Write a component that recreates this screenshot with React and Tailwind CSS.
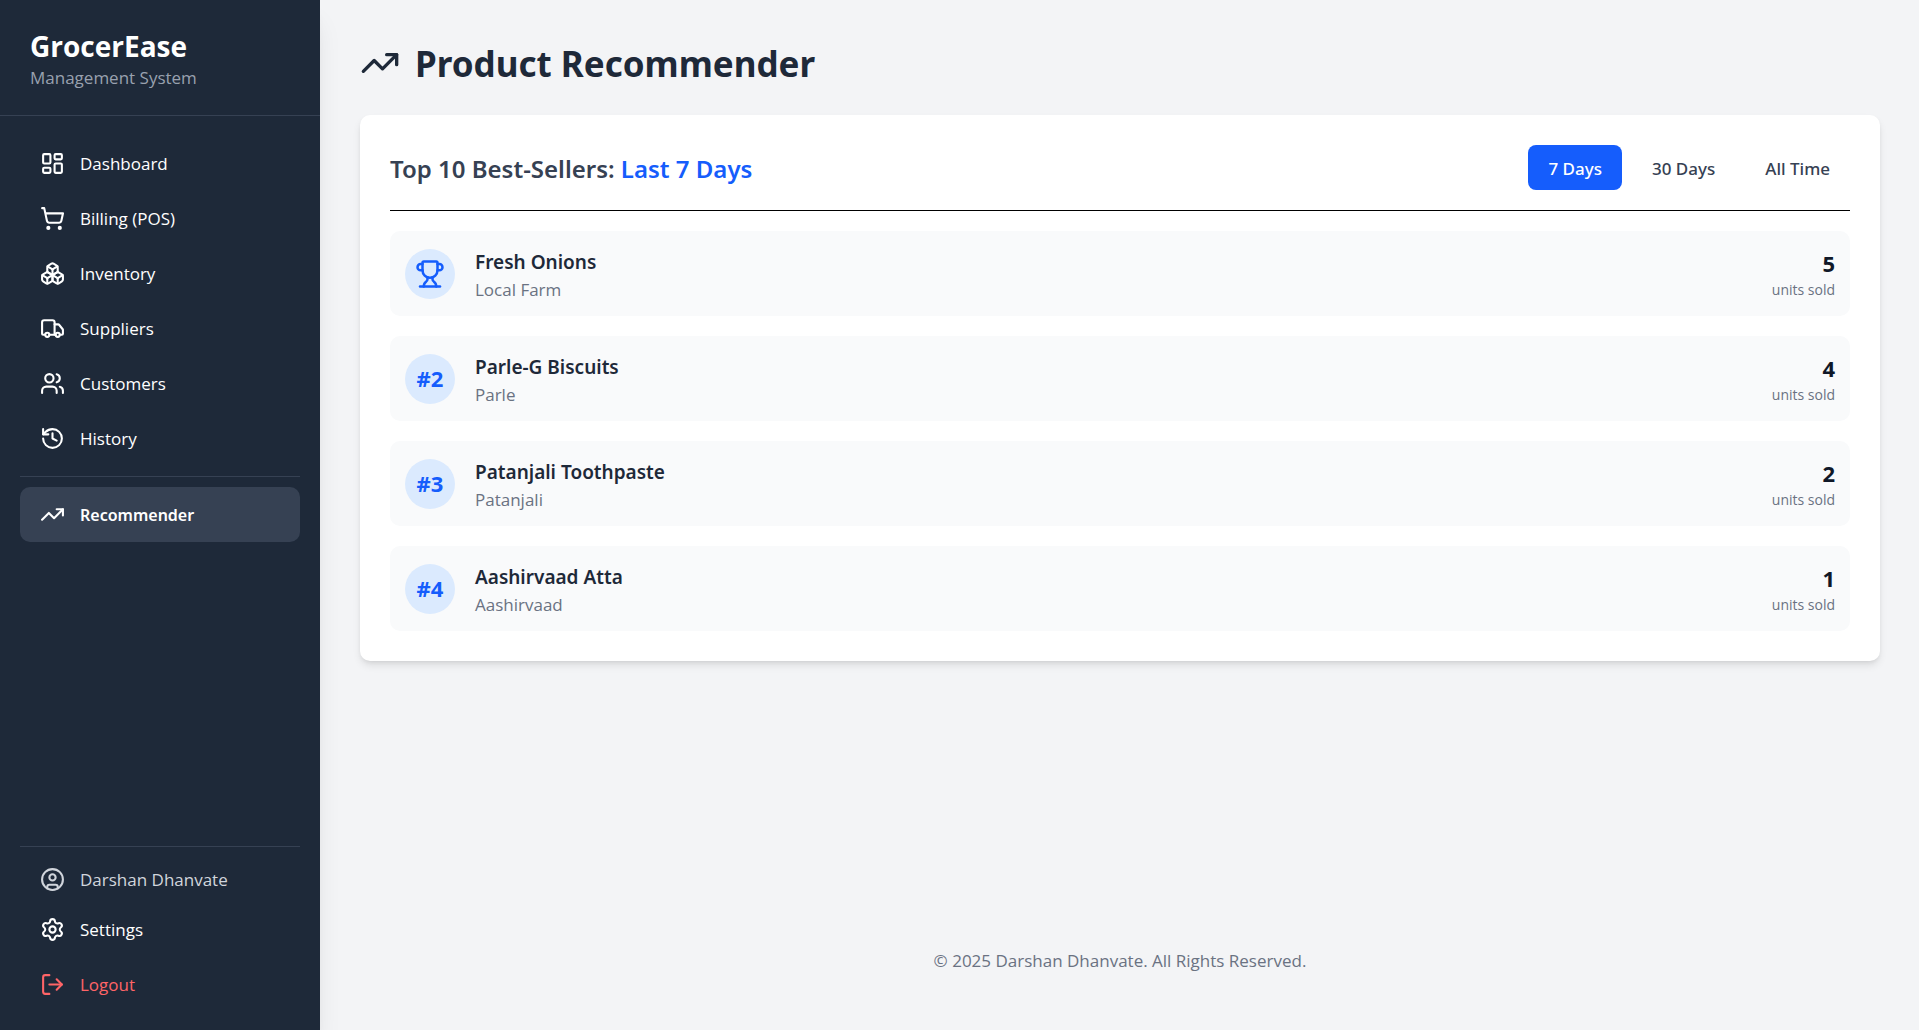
import {
  Boxes, CircleUser, History, LayoutDashboard, LogOut, Settings,
  ShoppingCart, TrendingUp, Trophy, Truck, Users,
} from 'lucide-react';

const NAV = [
  { label: 'Dashboard', Icon: LayoutDashboard },
  { label: 'Billing (POS)', Icon: ShoppingCart },
  { label: 'Inventory', Icon: Boxes },
  { label: 'Suppliers', Icon: Truck },
  { label: 'Customers', Icon: Users },
  { label: 'History', Icon: History },
];

const PRODUCTS = [
  { rank: 1, name: 'Fresh Onions', brand: 'Local Farm', units: 5 },
  { rank: 2, name: 'Parle-G Biscuits', brand: 'Parle', units: 4 },
  { rank: 3, name: 'Patanjali Toothpaste', brand: 'Patanjali', units: 2 },
  { rank: 4, name: 'Aashirvaad Atta', brand: 'Aashirvaad', units: 1 },
];

const RANGES = ['7 Days', '30 Days', 'All Time'];

function NavLink({ label, Icon, className = 'text-[17px] text-white' }) {
  return (
    <a href="#" className={`flex h-[55px] items-center gap-[15px] rounded-[10px] px-5 ${className}`}>
      <Icon size={25} />
      <span>{label}</span>
    </a>
  );
}

function Sidebar() {
  return (
    <aside className="flex w-80 shrink-0 flex-col bg-gray-800 text-white shadow-xl">
      <div className="border-b border-gray-700 px-[30px] pt-[29px] pb-[22px]">
        <div className="text-[28px] leading-[34px] font-bold">GrocerEase</div>
        <p className="text-[17px] leading-[30px] text-gray-400">Management System</p>
      </div>
      <nav className="flex flex-1 flex-col px-5 pt-5">
        {NAV.map((item) => <NavLink key={item.label} {...item} />)}
        <div className="mt-[10px] border-t border-gray-700 pt-[10px]">
          <NavLink
            label="Recommender"
            Icon={TrendingUp}
            className="bg-gray-700 font-['Noto_Sans',sans-serif] text-[16px] font-semibold text-white"
          />
        </div>
      </nav>
      <div className="mx-5 border-t border-gray-700 pt-[10px] pb-[18px]">
        <div className="flex h-[45px] items-center gap-[15px] px-5 text-[17px] text-gray-300">
          <CircleUser size={25} />
          <span>Darshan Dhanvate</span>
        </div>
        <NavLink label="Settings" Icon={Settings} />
        <button type="button" className="flex h-[55px] w-full items-center gap-[15px] px-5 text-[17px] text-red-400">
          <LogOut size={25} />
          <span>Logout</span>
        </button>
      </div>
    </aside>
  );
}

function ProductRow({ rank, name, brand, units }) {
  return (
    <li className="flex h-[85px] items-center rounded-[10px] bg-gray-50 px-[15px]">
      <div className="flex size-[50px] items-center justify-center rounded-full bg-blue-100 text-[22px] font-bold text-blue-600">
        {rank === 1 ? <Trophy size={30} /> : `#${rank}`}
      </div>
      <div className="ml-5 flex-1">
        <p className="font-['Noto_Sans',sans-serif] text-[19px] leading-[32px] font-semibold text-gray-800">{name}</p>
        <p className="text-[17px] leading-[24px] text-gray-500">{brand}</p>
      </div>
      <div className="text-right">
        <p className="text-[22px] leading-[32px] font-bold text-gray-900">{units}</p>
        <p className="text-[14px] leading-[22px] text-gray-500">units sold</p>
      </div>
    </li>
  );
}

export default function App() {
  return (
    <div className="flex min-h-screen bg-gray-100 font-['Open_Sans','Noto_Sans',sans-serif]">
      <Sidebar />
      <div className="flex flex-1 flex-col pt-10 pr-[39px] pb-[50px] pl-10">
        <h1 className="mb-[30px] flex items-center gap-[15px] font-['Noto_Sans',sans-serif] text-[35px] leading-[45px] font-bold text-gray-800">
          <TrendingUp size={40} />
          <span className="pt-0.5 leading-[43px]">Product Recommender</span>
        </h1>
        <main className="rounded-[10px] bg-white p-[30px] shadow-[0_5px_8px_-1px_rgb(0_0_0/0.1),0_2px_5px_-2px_rgb(0_0_0/0.1)]">
          <div className="mb-5 flex items-center justify-between border-b border-black pb-5 font-['Noto_Sans',sans-serif]">
            <h2 className="pt-0.5 text-[24px] leading-[35px] font-semibold text-gray-700">
              Top 10 Best-Sellers: <span className="text-blue-600">Last 7 Days</span>
            </h2>
            <div className="flex gap-[10px]">
              {RANGES.map((range, i) => (
                <button
                  key={range}
                  type="button"
                  className={`h-[45px] rounded-[8px] px-5 pt-0.5 text-[17px] font-medium ${i === 0 ? 'bg-blue-600 text-white' : 'text-gray-700'}`}
                >
                  {range}
                </button>
              ))}
            </div>
          </div>
          <ul className="flex flex-col gap-5">
            {PRODUCTS.map((p) => <ProductRow key={p.rank} {...p} />)}
          </ul>
        </main>
        <footer className="mt-auto text-center text-[17px] leading-[38px] text-gray-500">
          © 2025 Darshan Dhanvate. All Rights Reserved.
        </footer>
      </div>
    </div>
  );
}
